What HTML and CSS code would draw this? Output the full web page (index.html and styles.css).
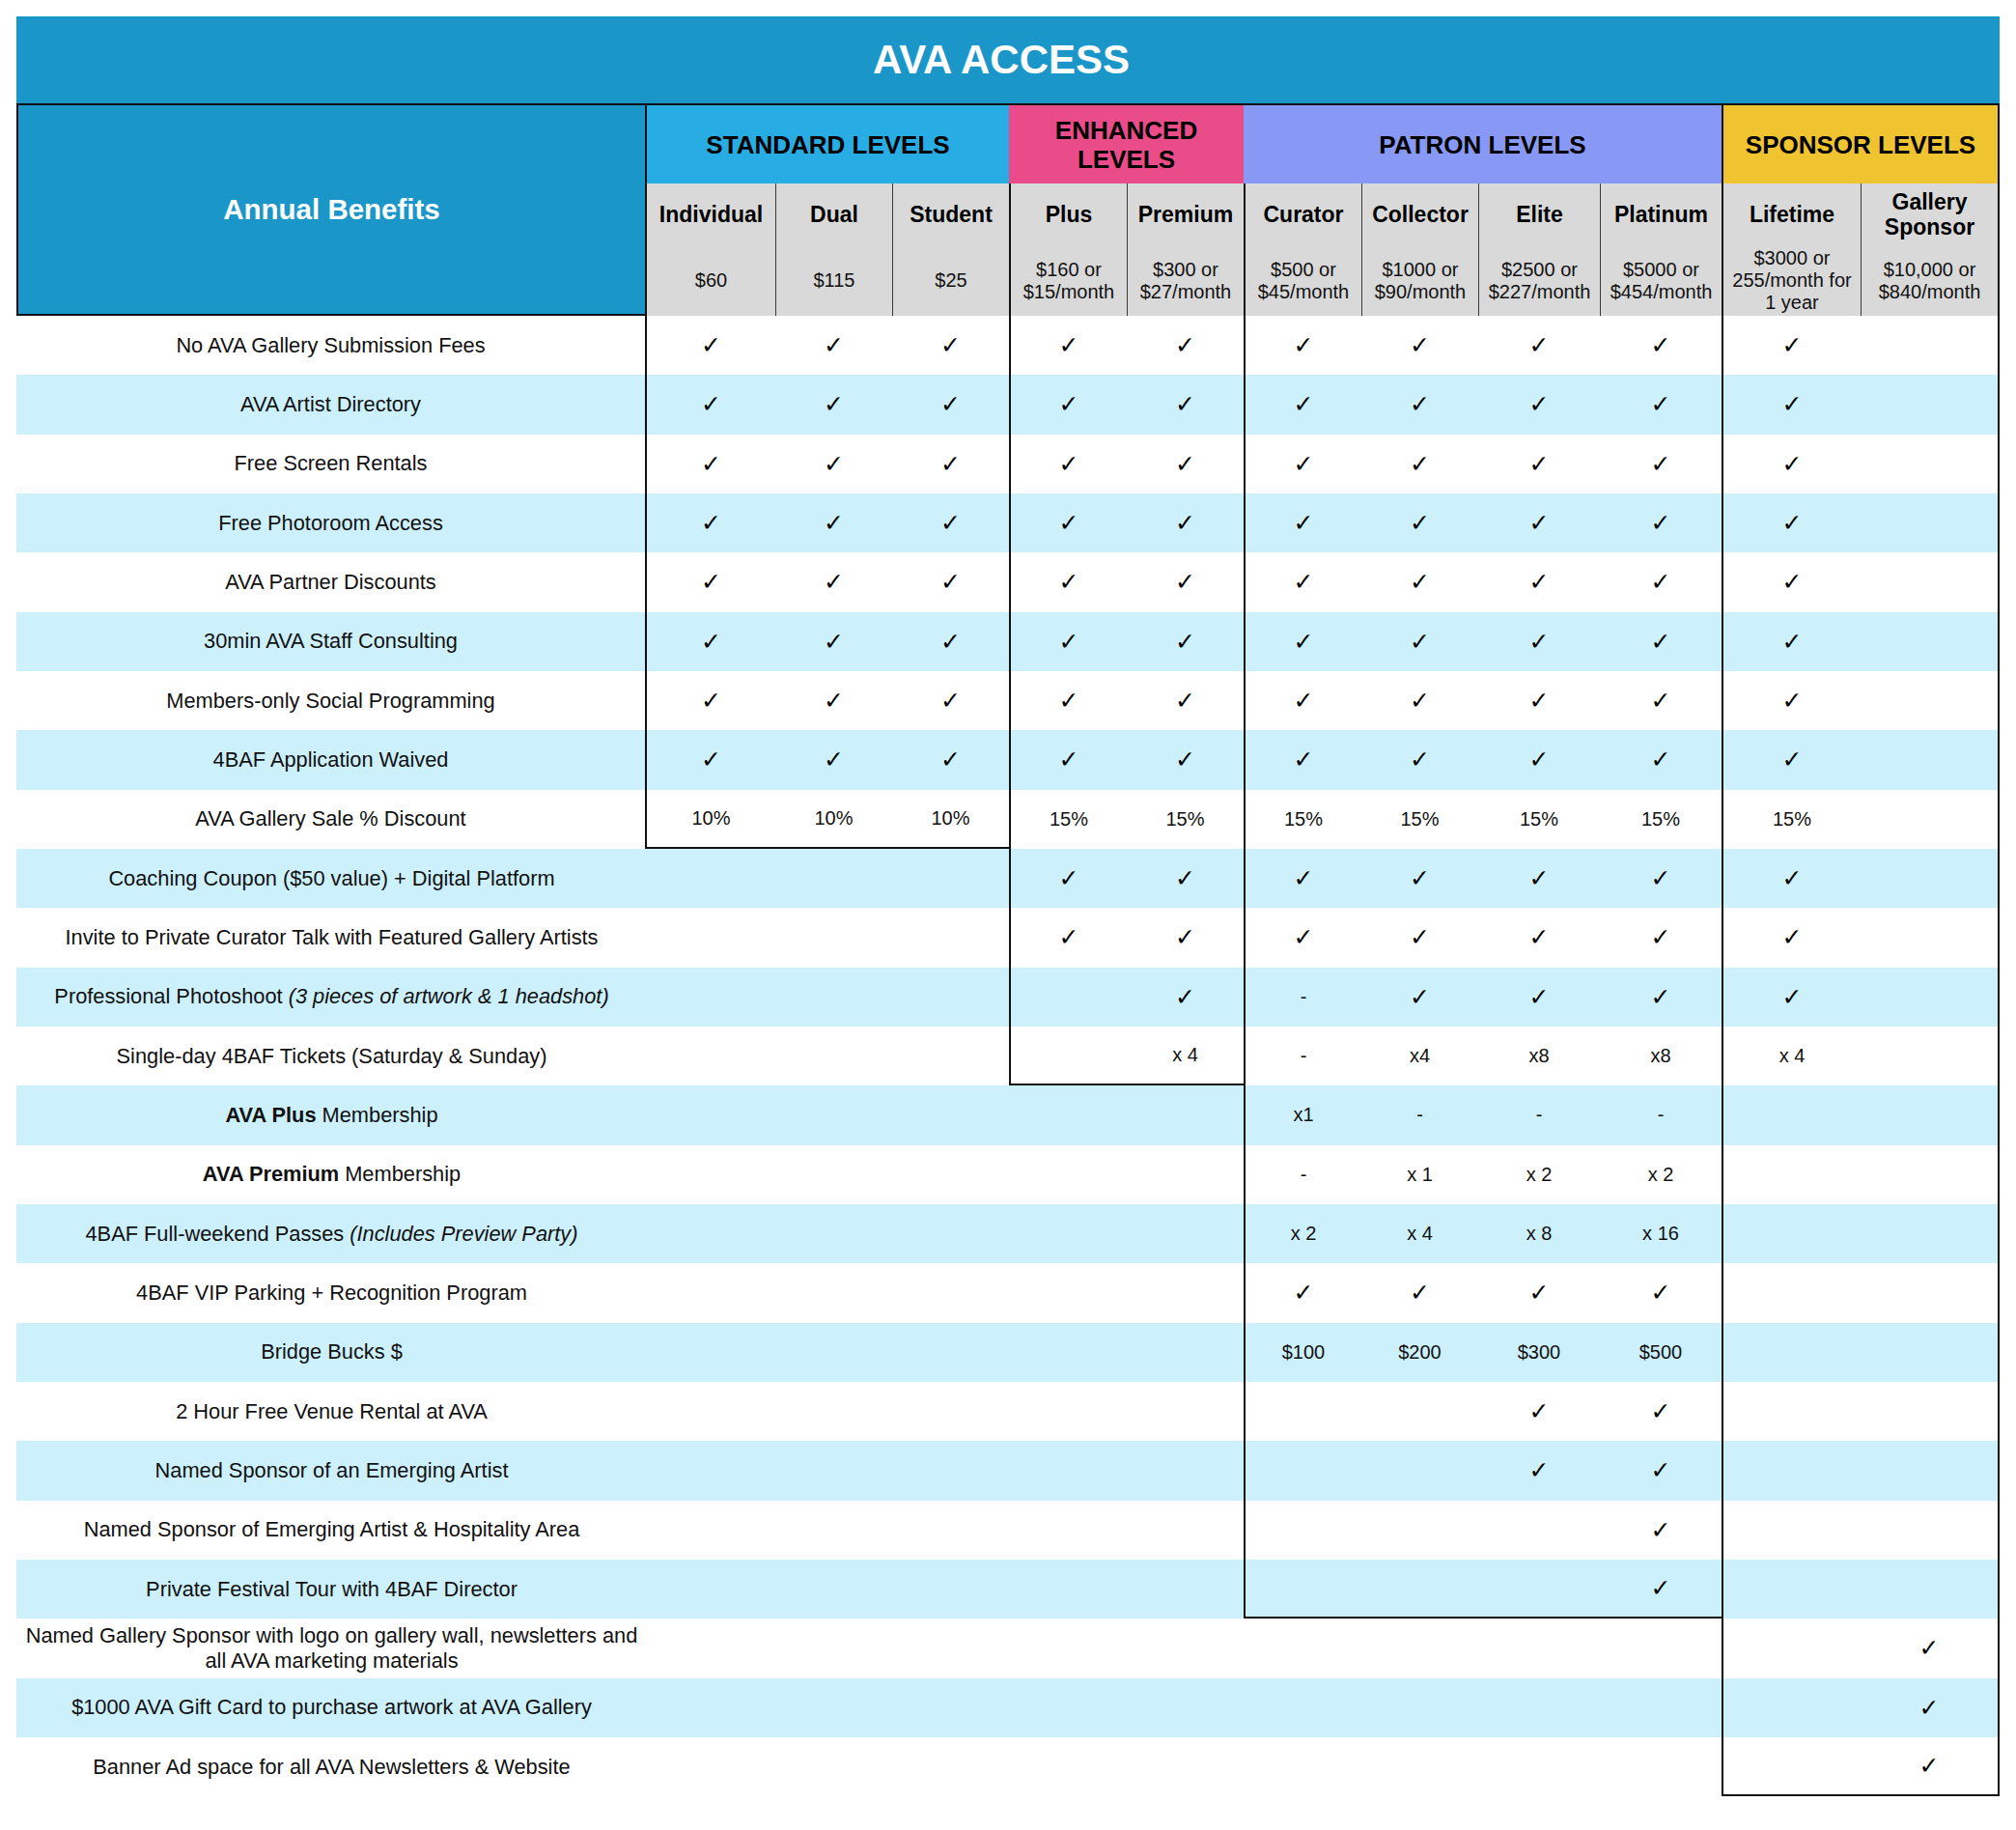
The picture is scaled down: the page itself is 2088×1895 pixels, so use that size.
FILE: index.html
```html
<!DOCTYPE html>
<html lang="en">
<head>
<meta charset="utf-8">
<title>AVA Access</title>
<link rel="stylesheet" href="styles.css">
</head>
<body>
<div class="chart">
  <div class="title">AVA ACCESS</div>
  <div class="head">
    <div class="annual">Annual Benefits</div>
    <div class="grp std">STANDARD LEVELS</div>
    <div class="grp enh">ENHANCED<br>LEVELS</div>
    <div class="grp pat">PATRON LEVELS</div>
    <div class="grp spn">SPONSOR LEVELS</div>

    <div class="sub"><div class="nm">Individual</div><div class="pr">$60</div></div>
    <div class="sub dv"><div class="nm">Dual</div><div class="pr">$115</div></div>
    <div class="sub dv"><div class="nm">Student</div><div class="pr">$25</div></div>
    <div class="sub bl"><div class="nm">Plus</div><div class="pr">$160 or<br>$15/month</div></div>
    <div class="sub dv"><div class="nm">Premium</div><div class="pr">$300 or<br>$27/month</div></div>
    <div class="sub bl"><div class="nm">Curator</div><div class="pr">$500 or<br>$45/month</div></div>
    <div class="sub dv"><div class="nm">Collector</div><div class="pr">$1000 or<br>$90/month</div></div>
    <div class="sub dv"><div class="nm">Elite</div><div class="pr">$2500 or<br>$227/month</div></div>
    <div class="sub dv"><div class="nm">Platinum</div><div class="pr">$5000 or<br>$454/month</div></div>
    <div class="sub bl"><div class="nm">Lifetime</div><div class="pr">$3000 or<br>255/month for<br>1 year</div></div>
    <div class="sub dv br"><div class="nm">Gallery<br>Sponsor</div><div class="pr">$10,000 or<br>$840/month</div></div>
  </div>

  <div class="row"><div class="c b br">No AVA Gallery Submission Fees</div><div class="c k">✓</div><div class="c k">✓</div><div class="c k">✓</div><div class="c k bl">✓</div><div class="c k">✓</div><div class="c k bl">✓</div><div class="c k">✓</div><div class="c k">✓</div><div class="c k">✓</div><div class="c k bl">✓</div><div class="c br"></div></div>
  <div class="row alt"><div class="c b br">AVA Artist Directory</div><div class="c k">✓</div><div class="c k">✓</div><div class="c k">✓</div><div class="c k bl">✓</div><div class="c k">✓</div><div class="c k bl">✓</div><div class="c k">✓</div><div class="c k">✓</div><div class="c k">✓</div><div class="c k bl">✓</div><div class="c br"></div></div>
  <div class="row"><div class="c b br">Free Screen Rentals</div><div class="c k">✓</div><div class="c k">✓</div><div class="c k">✓</div><div class="c k bl">✓</div><div class="c k">✓</div><div class="c k bl">✓</div><div class="c k">✓</div><div class="c k">✓</div><div class="c k">✓</div><div class="c k bl">✓</div><div class="c br"></div></div>
  <div class="row alt"><div class="c b br">Free Photoroom Access</div><div class="c k">✓</div><div class="c k">✓</div><div class="c k">✓</div><div class="c k bl">✓</div><div class="c k">✓</div><div class="c k bl">✓</div><div class="c k">✓</div><div class="c k">✓</div><div class="c k">✓</div><div class="c k bl">✓</div><div class="c br"></div></div>
  <div class="row"><div class="c b br">AVA Partner Discounts</div><div class="c k">✓</div><div class="c k">✓</div><div class="c k">✓</div><div class="c k bl">✓</div><div class="c k">✓</div><div class="c k bl">✓</div><div class="c k">✓</div><div class="c k">✓</div><div class="c k">✓</div><div class="c k bl">✓</div><div class="c br"></div></div>
  <div class="row alt"><div class="c b br">30min AVA Staff Consulting</div><div class="c k">✓</div><div class="c k">✓</div><div class="c k">✓</div><div class="c k bl">✓</div><div class="c k">✓</div><div class="c k bl">✓</div><div class="c k">✓</div><div class="c k">✓</div><div class="c k">✓</div><div class="c k bl">✓</div><div class="c br"></div></div>
  <div class="row"><div class="c b br">Members-only Social Programming</div><div class="c k">✓</div><div class="c k">✓</div><div class="c k">✓</div><div class="c k bl">✓</div><div class="c k">✓</div><div class="c k bl">✓</div><div class="c k">✓</div><div class="c k">✓</div><div class="c k">✓</div><div class="c k bl">✓</div><div class="c br"></div></div>
  <div class="row alt"><div class="c b br">4BAF Application Waived</div><div class="c k">✓</div><div class="c k">✓</div><div class="c k">✓</div><div class="c k bl">✓</div><div class="c k">✓</div><div class="c k bl">✓</div><div class="c k">✓</div><div class="c k">✓</div><div class="c k">✓</div><div class="c k bl">✓</div><div class="c br"></div></div>
  <div class="row"><div class="c b br">AVA Gallery Sale % Discount</div><div class="c bb">10%</div><div class="c bb">10%</div><div class="c bb">10%</div><div class="c bl">15%</div><div class="c">15%</div><div class="c bl">15%</div><div class="c">15%</div><div class="c">15%</div><div class="c">15%</div><div class="c bl">15%</div><div class="c br"></div></div>
  <div class="row alt"><div class="c b">Coaching Coupon ($50 value) + Digital Platform</div><div class="c"></div><div class="c"></div><div class="c"></div><div class="c k bl">✓</div><div class="c k">✓</div><div class="c k bl">✓</div><div class="c k">✓</div><div class="c k">✓</div><div class="c k">✓</div><div class="c k bl">✓</div><div class="c br"></div></div>
  <div class="row"><div class="c b">Invite to Private Curator Talk with Featured Gallery Artists</div><div class="c"></div><div class="c"></div><div class="c"></div><div class="c k bl">✓</div><div class="c k">✓</div><div class="c k bl">✓</div><div class="c k">✓</div><div class="c k">✓</div><div class="c k">✓</div><div class="c k bl">✓</div><div class="c br"></div></div>
  <div class="row alt"><div class="c b"><span>Professional Photoshoot <i>(3 pieces of artwork &amp; 1 headshot)</i></span></div><div class="c"></div><div class="c"></div><div class="c"></div><div class="c bl"></div><div class="c k">✓</div><div class="c bl">-</div><div class="c k">✓</div><div class="c k">✓</div><div class="c k">✓</div><div class="c k bl">✓</div><div class="c br"></div></div>
  <div class="row"><div class="c b">Single-day 4BAF Tickets (Saturday &amp; Sunday)</div><div class="c"></div><div class="c"></div><div class="c"></div><div class="c bl bb"></div><div class="c bb">x 4</div><div class="c bl">-</div><div class="c">x4</div><div class="c">x8</div><div class="c">x8</div><div class="c bl">x 4</div><div class="c br"></div></div>
  <div class="row alt"><div class="c b"><span><b>AVA Plus</b> Membership</span></div><div class="c"></div><div class="c"></div><div class="c"></div><div class="c"></div><div class="c"></div><div class="c bl">x1</div><div class="c">-</div><div class="c">-</div><div class="c">-</div><div class="c bl"></div><div class="c br"></div></div>
  <div class="row"><div class="c b"><span><b>AVA Premium</b> Membership</span></div><div class="c"></div><div class="c"></div><div class="c"></div><div class="c"></div><div class="c"></div><div class="c bl">-</div><div class="c">x 1</div><div class="c">x 2</div><div class="c">x 2</div><div class="c bl"></div><div class="c br"></div></div>
  <div class="row alt"><div class="c b"><span>4BAF Full-weekend Passes <i>(Includes Preview Party)</i></span></div><div class="c"></div><div class="c"></div><div class="c"></div><div class="c"></div><div class="c"></div><div class="c bl">x 2</div><div class="c">x 4</div><div class="c">x 8</div><div class="c">x 16</div><div class="c bl"></div><div class="c br"></div></div>
  <div class="row"><div class="c b">4BAF VIP Parking + Recognition Program</div><div class="c"></div><div class="c"></div><div class="c"></div><div class="c"></div><div class="c"></div><div class="c k bl">✓</div><div class="c k">✓</div><div class="c k">✓</div><div class="c k">✓</div><div class="c bl"></div><div class="c br"></div></div>
  <div class="row alt"><div class="c b">Bridge Bucks $</div><div class="c"></div><div class="c"></div><div class="c"></div><div class="c"></div><div class="c"></div><div class="c bl">$100</div><div class="c">$200</div><div class="c">$300</div><div class="c">$500</div><div class="c bl"></div><div class="c br"></div></div>
  <div class="row"><div class="c b">2 Hour Free Venue Rental at AVA</div><div class="c"></div><div class="c"></div><div class="c"></div><div class="c"></div><div class="c"></div><div class="c bl"></div><div class="c"></div><div class="c k">✓</div><div class="c k">✓</div><div class="c bl"></div><div class="c br"></div></div>
  <div class="row alt"><div class="c b">Named Sponsor of an Emerging Artist</div><div class="c"></div><div class="c"></div><div class="c"></div><div class="c"></div><div class="c"></div><div class="c bl"></div><div class="c"></div><div class="c k">✓</div><div class="c k">✓</div><div class="c bl"></div><div class="c br"></div></div>
  <div class="row"><div class="c b">Named Sponsor of Emerging Artist &amp; Hospitality Area</div><div class="c"></div><div class="c"></div><div class="c"></div><div class="c"></div><div class="c"></div><div class="c bl"></div><div class="c"></div><div class="c"></div><div class="c k">✓</div><div class="c bl"></div><div class="c br"></div></div>
  <div class="row alt"><div class="c b">Private Festival Tour with 4BAF Director</div><div class="c"></div><div class="c"></div><div class="c"></div><div class="c"></div><div class="c"></div><div class="c bl bb"></div><div class="c bb"></div><div class="c bb"></div><div class="c k bb">✓</div><div class="c bl"></div><div class="c br"></div></div>
  <div class="row"><div class="c b two">Named Gallery Sponsor with logo on gallery wall, newsletters and<br>all AVA marketing materials</div><div class="c"></div><div class="c"></div><div class="c"></div><div class="c"></div><div class="c"></div><div class="c"></div><div class="c"></div><div class="c"></div><div class="c"></div><div class="c bl"></div><div class="c k br">✓</div></div>
  <div class="row alt"><div class="c b">$1000 AVA Gift Card to purchase artwork at AVA Gallery</div><div class="c"></div><div class="c"></div><div class="c"></div><div class="c"></div><div class="c"></div><div class="c"></div><div class="c"></div><div class="c"></div><div class="c"></div><div class="c bl"></div><div class="c k br">✓</div></div>
  <div class="row"><div class="c b">Banner Ad space for all AVA Newsletters &amp; Website</div><div class="c"></div><div class="c"></div><div class="c"></div><div class="c"></div><div class="c"></div><div class="c"></div><div class="c"></div><div class="c"></div><div class="c"></div><div class="c bl bb"></div><div class="c k br bb">✓</div></div>
</div>
</body>
</html>
```

FILE: styles.css
```css
* {
  box-sizing: border-box;
}

:root {
  --cols: 653px 133px 121px 121px 122px 121px 122px 121px 126px 126px 144px 144px;
  --line: 2px solid #111;
}

body {
  margin: 0;
  padding: 17px;
  background: #ffffff;
  font-family: "Liberation Sans", "DejaVu Sans", Arial, sans-serif;
  color: #111;
}

.chart {
  width: 2054px;
}

.title {
  height: 90px;
  padding-right: 14px;
  background: #1a96c9;
  color: #ffffff;
  font-weight: bold;
  font-size: 42px;
  display: flex;
  align-items: center;
  justify-content: center;
}

.head {
  display: grid;
  grid-template-columns: var(--cols);
  grid-template-rows: 81px 137px;
  border-top: var(--line);
}

.annual {
  grid-row: 1 / 3;
  grid-column: 1;
  background: #1a96c9;
  color: #ffffff;
  font-weight: bold;
  font-size: 29.5px;
  display: flex;
  align-items: center;
  justify-content: center;
  border-left: var(--line);
  border-right: var(--line);
  border-bottom: var(--line);
}

.grp {
  grid-row: 1;
  display: flex;
  align-items: center;
  justify-content: center;
  text-align: center;
  font-weight: bold;
  font-size: 26px;
  line-height: 30px;
  color: #000;
}

.std {
  grid-column: 2 / 5;
  background: #27ade3;
}

.enh {
  grid-column: 5 / 7;
  background: #ea4c89;
}

.pat {
  grid-column: 7 / 11;
  background: #8799f4;
}

.spn {
  grid-column: 11 / 13;
  background: #f0c331;
  border-left: var(--line);
  border-right: var(--line);
}

.sub {
  grid-row: 2;
  background: #d9d9d9;
  display: flex;
  flex-direction: column;
  text-align: center;
  color: #000;
}

.sub .nm {
  height: 64px;
  display: flex;
  align-items: center;
  justify-content: center;
  font-weight: bold;
  font-size: 23px;
  line-height: 26.5px;
}

.sub .pr {
  flex: 1;
  display: flex;
  align-items: center;
  justify-content: center;
  font-size: 20px;
  line-height: 22.7px;
  color: #111;
}

.sub.dv {
  border-left: 1px solid #3a3a3a;
}

.row {
  display: grid;
  grid-template-columns: var(--cols);
  height: 61.33px;
}

.row.alt {
  background: #ccf0fc;
}

.c {
  display: flex;
  align-items: center;
  justify-content: center;
  text-align: center;
  font-size: 20px;
  color: #111;
}

.c.k {
  font-family: "DejaVu Sans", sans-serif;
  font-size: 25px;
  font-weight: bold;
  color: #000;
}

.c.b {
  font-size: 21.8px;
  padding: 0 6px;
}

.c.two {
  line-height: 25.7px;
}

.bl {
  border-left: var(--line);
}

.br {
  border-right: var(--line);
}

.bb {
  border-bottom: var(--line);
}
```
